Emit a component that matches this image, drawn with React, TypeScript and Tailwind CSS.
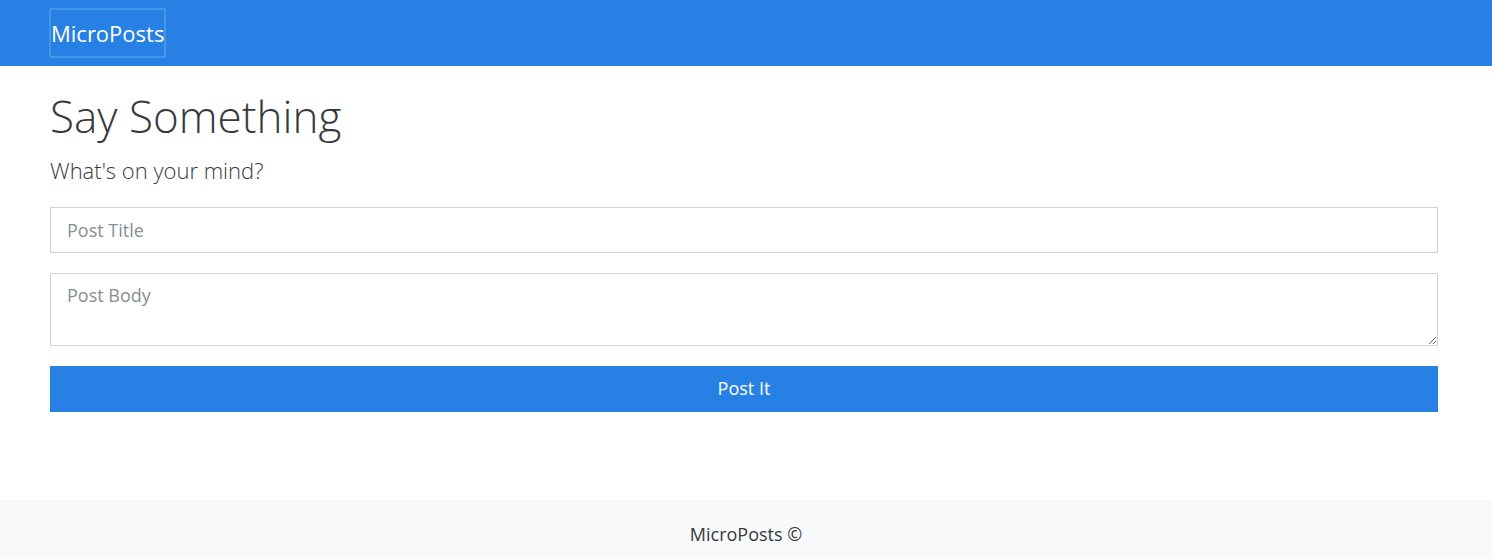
export default function App() {
  const font = { fontFamily: '"Open Sans", "Noto Sans", sans-serif' };
  return (
    <div className="flex min-h-[559px] flex-col bg-white text-[#373a3c]" style={font}>
      <nav className="flex h-[66px] items-center bg-[#2780e3] pl-[49px]">
        <a className="flex h-[50px] items-center rounded-[2px] border-2 border-[#4a94e8] px-0 text-[22px] leading-none text-white">
          MicroPosts
        </a>
      </nav>
      <main className="ml-[50px] w-[1388px] flex-1">
        <h1 className="mt-[24px] text-[44px] font-light leading-[1.2] text-[#373a3c]">Say Something</h1>
        <p className="mt-[12px] text-[22px] font-light leading-[1.4] text-[#373a3c]">What's on your mind?</p>
        <div className="mt-[21px] flex flex-col">
          <input
            className="h-[46px] w-full border border-[#ced4da] px-4 text-[18px] placeholder:text-[#868e96] outline-none"
            placeholder="Post Title"
          />
          <textarea
            className="mt-[20px] h-[73px] w-full border border-[#ced4da] px-4 py-[8px] text-[18px] leading-[1.5] placeholder:text-[#868e96] outline-none"
            placeholder="Post Body"
          />
          <button className="mt-[20px] h-[46px] w-full bg-[#2780e3] text-[18px] text-white">Post It</button>
        </div>
      </main>
      <footer className="flex h-[59px] items-center justify-center bg-[#f8f9fa] pt-[10px] text-[18px] text-[#373a3c]">
        MicroPosts ©
      </footer>
    </div>
  );
}
